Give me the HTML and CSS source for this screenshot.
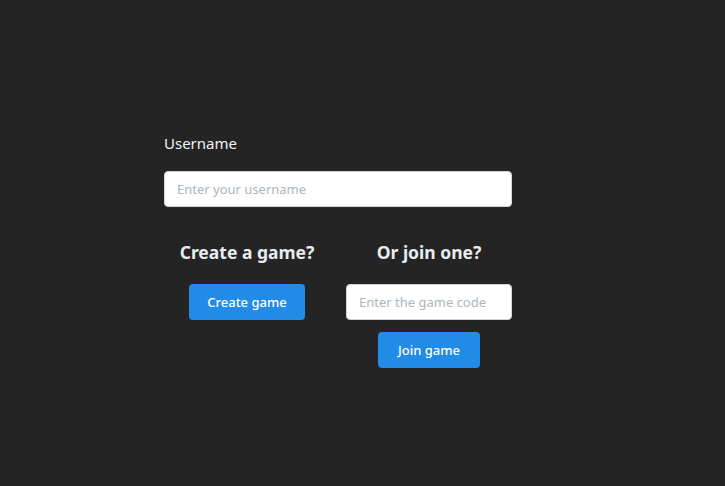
FILE: index.html
```html
<!DOCTYPE html>
<html>
<head>
<meta charset="utf-8">
<link rel="stylesheet" href="styles.css">
</head>
<body>
<main class="page">
  <div class="panel">
    <label class="label" for="username">Username</label>
    <input id="username" class="input" type="text" placeholder="Enter your username">
    <div class="columns">
      <section class="col">
        <h2 class="heading">Create a game?</h2>
        <button class="btn btn-create">Create game</button>
      </section>
      <section class="col">
        <h2 class="heading">Or join one?</h2>
        <input class="input" type="text" placeholder="Enter the game code">
        <button class="btn btn-join">Join game</button>
      </section>
    </div>
  </div>
</main>
</body>
</html>
```

FILE: styles.css
```css
html, body {
  margin: 0;
  padding: 0;
  background: #242424;
  height: 100%;
}
body {
  font-family: "Noto Sans", "Open Sans", sans-serif;
  color: #e9ecef;
}
.page {
  display: flex;
  justify-content: flex-start;
  padding-top: 133px;
  padding-left: 164px;
}
.panel {
  width: 348px;
  display: flex;
  flex-direction: column;
}
.label {
  font-size: 15px;
  line-height: 20px;
  color: #f1f3f5;
  margin-bottom: 18px;
}
.input {
  box-sizing: border-box;
  height: 36px;
  width: 100%;
  border: 1px solid #ced4da;
  border-radius: 4px;
  background: #fff;
  padding: 0 12px;
  font-family: inherit;
  font-size: 13px;
  color: #212529;
  outline: none;
}
.input::placeholder {
  color: #adb5bd;
}
.columns {
  display: grid;
  grid-template-columns: 1fr 1fr;
  column-gap: 16px;
  margin-top: 33px;
}
.col {
  display: flex;
  flex-direction: column;
  align-items: center;
}
.heading {
  margin: 0 0 20px;
  font-size: 17.5px;
  line-height: 24px;
  font-weight: 700;
  color: #e9ecef;
}
.btn {
  box-sizing: border-box;
  height: 36px;
  border: none;
  border-radius: 4px;
  background: #228be6;
  color: #fff;
  font-family: inherit;
  font-size: 13px;
  font-weight: 500;
  padding: 0 18px;
  cursor: pointer;
}
.btn-create { width: 116px; }
.btn-join { width: 102px; margin-top: 12px; }
```
